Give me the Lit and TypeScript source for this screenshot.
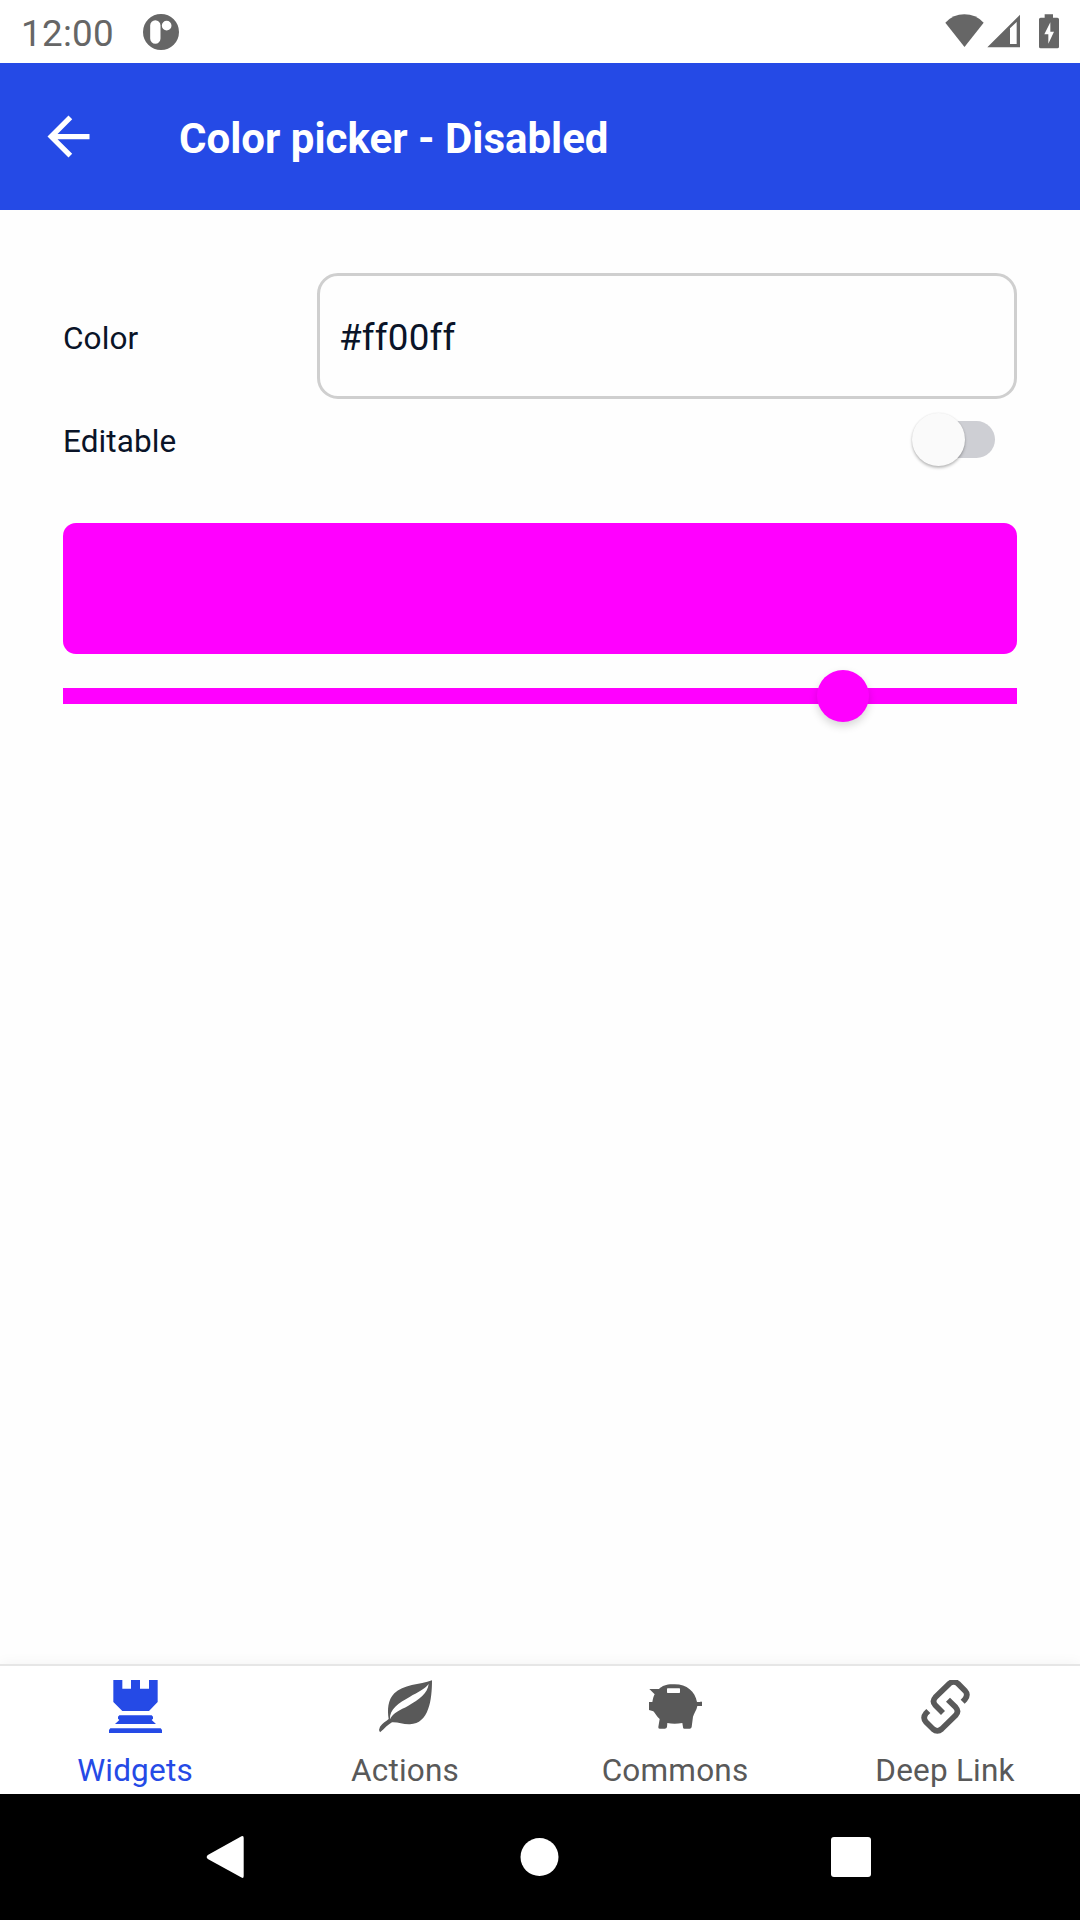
import { LitElement, html, css, svg } from "lit";
import { customElement, property, state } from "lit/decorators.js";
import { classMap } from "lit/directives/class-map.js";
import { styleMap } from "lit/directives/style-map.js";

@customElement("status-bar")
class StatusBar extends LitElement {
  static styles = css`
    :host {
      display: flex;
      align-items: center;
      height: 63px;
      padding: 0 20px 0 21px;
      box-sizing: border-box;
      background: #fff;
      color: #666;
      fill: #666;
    }
    .time {
      font-size: 36.75px;
      line-height: 43px;
      letter-spacing: 0.3px;
      padding-top: 3px;
      width: 122px;
    }
    .app { width: 36px; height: 36px; }
    .spacer { flex: 1; }
    .system { width: 116px; height: 36px; }
    svg { display: block; }
  `;

  render() {
    return html`
      <span class="time">12:00</span>
      <svg class="app" viewBox="429 41 108 108">
        <path fill-rule="evenodd" d="M483 41a54 54 0 1 0 0 108a54 54 0 1 0 0-108z
          M466 60a15.500 15.500 0 0 1 15.500 15.500v39a15.500 15.500 0 0 1-31 0v-39a15.500 15.500 0 0 1 15.500-15.500z
          M500 61.500a14.500 14.500 0 1 1 0 29a14.500 14.500 0 1 1 0-29z"/>
      </svg>
      <span class="spacer"></span>
      <svg class="system" viewBox="72 41 348 108">
        <path d="M76 67Q100 42 133 42Q167 42 191 67L133.500 140Z"/>
        <path fill-rule="evenodd" d="M202 141L300 43V141ZM270 84V131H290V65Z"/>
        <path fill-rule="evenodd" d="M374 42h25v10h13q5 0 5 5v82q0 5-5 5h-50q-5 0-5-5V57q0-5 5-5h12z
          M391 66L373 102h12v28l17-36h-11z"/>
      </svg>
    `;
  }
}

@customElement("title-bar")
class TitleBar extends LitElement {
  static styles = css`
    :host {
      display: flex;
      align-items: center;
      height: 147px;
      padding-left: 37px;
      box-sizing: border-box;
      background: #254ae6;
      color: #fff;
    }
    .back { display: block; width: 63px; height: 63px; fill: #fff; }
    .title {
      margin: 4px 0 0 79px;
      font-size: 42px;
      font-weight: 700;
      line-height: 50px;
    }
  `;
  @property() heading = "";

  render() {
    return html`
      <svg class="back" viewBox="0 0 24 24">
        <path d="M20 11H7.830l5.590-5.590L12 4l-8 8 8 8 1.410-1.410L7.830 13H20v-2z"/>
      </svg>
      <h1 class="title">${this.heading}</h1>
    `;
  }
}

@customElement("toggle-switch")
class ToggleSwitch extends LitElement {
  static styles = css`
    :host { display: block; }
    .track {
      display: flex;
      align-items: center;
      width: 74px;
      height: 37px;
      border-radius: 19px;
      background: #cecfd4;
    }
    .thumb {
      flex: none;
      width: 53px;
      height: 53px;
      margin-left: -9px;
      border-radius: 50%;
      background: #fafafa;
      box-shadow: 0 2px 3px rgba(0, 0, 0, 0.26), 0 0 2px rgba(0, 0, 0, 0.08);
    }
  `;
  render() {
    return html`<div class="track"><div class="thumb"></div></div>`;
  }
}

@customElement("color-picker")
class ColorPicker extends LitElement {
  static styles = css`
    :host { display: block; }
    .swatch { height: 131px; border-radius: 13px; }
    .slider {
      display: flex;
      align-items: center;
      height: 52px;
      margin-top: 16px;
    }
    .rail { display: flex; align-items: center; width: 100%; height: 16px; }
    .knob {
      flex: none;
      width: 52px;
      height: 52px;
      border-radius: 50%;
      transform: translateX(-50%);
      box-shadow: 0 4px 9px rgba(0, 0, 0, 0.16);
    }
  `;
  @property() color = "#ff00ff";
  @property({ type: Number }) position = 0;

  render() {
    const fill = { background: this.color };
    return html`
      <div class="swatch" style=${styleMap(fill)}></div>
      <div class="slider">
        <div class="rail" style=${styleMap(fill)}>
          <div class="knob" style=${styleMap({ ...fill, marginLeft: `${this.position}%` })}></div>
        </div>
      </div>
    `;
  }
}

const tabs = [
  {
    label: "Widgets",
    origin: 144,
    icon: svg`
      <path d="M160 90H187V116H213V90H240V116H267V90H293V156L267 183H187L160 156Z"/>
      <path d="M178 195.500H275L279 200V206L275 210L288 222H165L178 210L174 206V200Z"/>
      <path d="M147 249V240L151 235H302L306 240V249Z"/>`,
  },
  {
    label: "Actions",
    origin: 144,
    icon: svg`
      <path fill-rule="evenodd" d="M306 91C306 150 297 221 240 223C220 224 205 216 186 217C174 223 164 236 150 247Q145 238 150 230C158 219 168 214 176 207C172 180 173 150 193 130C218 104 270 104 306 91Z
        M180 208C189 187 210 181 235 167C268 148 293 130 296 102C283 119 262 127 240 140C205 159 178 178 180 208Z"/>`,
  },
  {
    label: "Commons",
    origin: 174,
    icon: svg`
      <path fill-rule="evenodd" d="M178 117L207 117C217 108 228 103 247 103C287 100 315 122 321 156H331L333 154L336 157V168H322C320 180 312 190 309 200L305 231Q304 236 299 236H283Q278 236 279 231L277 219Q265 221 254 221Q242 221 232 219L231 231Q230 236 224 236H209Q204 236 205 231L209 207C200 200 195 188 190 184L177 180V156H187C189 147 190 140 194 133Z
        M233 115Q231 115 231 117V127Q231 129 233 129H268Q270 129 270 127V117Q270 115 268 115Z"/>`,
  },
  {
    label: "Deep Link",
    origin: 174,
    icon: svg`
      <g fill="none" stroke="currentColor" stroke-width="17">
        <path d="M249 189L226 166Q215 154 226 142L268 101Q281 90 294 101L315 122Q326 134 315 148L308 155"/>
        <path d="M264 149L287 172Q298 184 287 196L245 237Q232 248 219 237L198 216Q187 204 198 190L205 183"/>
      </g>`,
  },
];

@customElement("tab-bar")
class TabBar extends LitElement {
  static styles = css`
    :host {
      display: grid;
      grid-template-columns: repeat(4, 1fr);
      height: 130px;
      box-sizing: border-box;
      border-top: 2px solid #e6e6e6;
      background: #fff;
      box-shadow: 0 0 14px rgba(0, 0, 0, 0.05);
    }
    .tab {
      display: flex;
      flex-direction: column;
      align-items: center;
      padding-top: 14px;
      color: #595959;
    }
    .tab.selected { color: #254ae6; }
    .icon { display: block; width: 54px; height: 54px; fill: currentColor; }
    .label {
      margin-top: 18px;
      font-size: 31.5px;
      line-height: 38px;
      letter-spacing: 0.2px;
    }
  `;
  @state() private selected = "Widgets";

  render() {
    return tabs.map(
      (tab) => html`
        <div
          class=${classMap({ tab: true, selected: tab.label === this.selected })}
          @click=${() => (this.selected = tab.label)}
        >
          <svg class="icon" viewBox="${tab.origin} 90 162 162">${tab.icon}</svg>
          <span class="label">${tab.label}</span>
        </div>
      `
    );
  }
}

@customElement("system-nav")
class SystemNav extends LitElement {
  static styles = css`
    :host {
      display: flex;
      align-items: center;
      justify-content: space-between;
      height: 126px;
      padding: 0 207px 0 204px;
      box-sizing: border-box;
      background: #000;
    }
    .key { display: block; width: 44px; height: 44px; fill: #fff; }
  `;
  render() {
    return html`
      <svg class="key" viewBox="0 0 44 44">
        <path d="M37.500 1.300Q39.700 0.300 39.700 3V41Q39.700 43.700 37.500 42.600L3.800 24Q1.600 22 3.800 20Z"/>
      </svg>
      <svg class="key" viewBox="0 0 44 44"><circle cx="22.500" cy="22" r="19"/></svg>
      <svg class="key" viewBox="0 0 44 44"><rect x="2" y="2" width="40" height="40" rx="3"/></svg>
    `;
  }
}

@customElement("app-root")
class AppRoot extends LitElement {
  static styles = css`
    :host {
      display: flex;
      flex-direction: column;
      width: 1080px;
      height: 1920px;
      overflow: hidden;
      background: #fefefe;
      color: #0a1428;
      font-family: Roboto, sans-serif;
    }
    .content {
      flex: 1;
      padding: 63px;
    }
    .row { display: flex; align-items: center; justify-content: space-between; }
    .label {
      font-size: 31.5px;
      line-height: 38px;
      letter-spacing: 0.1px;
      padding-top: 5px;
    }
    .field {
      width: 700px;
      height: 126px;
      padding: 3px 19px 0;
      box-sizing: border-box;
      display: flex;
      align-items: center;
      border: 3px solid #cfcfcf;
      border-radius: 21px;
      font-size: 36.75px;
      line-height: 44px;
      letter-spacing: 0.2px;
      font-variant-ligatures: none;
    }
    .editable { height: 80px; }
    .toggle { margin-right: 22px; }
    .picker { margin-top: 44px; }
  `;
  @state() private color = "#ff00ff";

  render() {
    return html`
      <status-bar></status-bar>
      <title-bar heading="Color picker - Disabled"></title-bar>
      <main class="content">
        <div class="row">
          <span class="label">Color</span>
          <div class="field">${this.color}</div>
        </div>
        <div class="row editable">
          <span class="label">Editable</span>
          <toggle-switch class="toggle"></toggle-switch>
        </div>
        <color-picker class="picker" .color=${this.color} .position=${81.75}></color-picker>
      </main>
      <tab-bar></tab-bar>
      <system-nav></system-nav>
    `;
  }
}
